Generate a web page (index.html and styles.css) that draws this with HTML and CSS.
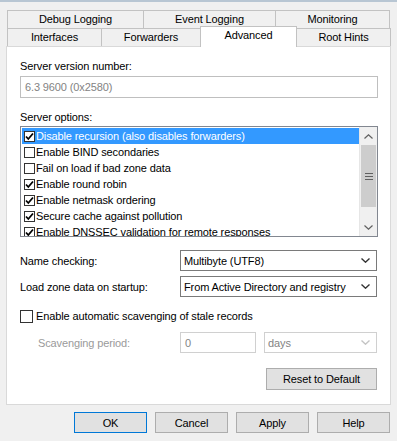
FILE: index.html
```html
<!DOCTYPE html>
<html>
<head>
<meta charset="utf-8">
<link rel="stylesheet" href="styles.css">
</head>
<body>
<div class="dialog">
  <div class="tabs">
    <div class="tabrow">
      <div class="tab w136">Debug Logging</div>
      <div class="tab w132">Event Logging</div>
      <div class="tab w115 last">Monitoring</div>
    </div>
    <div class="tabrow">
      <div class="tab w94">Interfaces</div>
      <div class="tab w99">Forwarders</div>
      <div class="tab w96 selected">Advanced</div>
      <div class="tab w94 last">Root Hints</div>
    </div>
  </div>
  <div class="panel">
    <div class="label first">Server version number:</div>
    <div class="textbox disabled">6.3 9600 (0x2580)</div>
    <div class="label second">Server options:</div>
    <div class="listbox">
      <div class="items">
        <div class="item sel"><span class="cb on"><svg viewBox="0 0 11 11" width="11" height="11"><path d="M2 5.5 L4.3 8 L9 2.5" fill="none" stroke="#000" stroke-width="1.8"/></svg></span>Disable recursion (also disables forwarders)</div>
        <div class="item"><span class="cb"></span>Enable BIND secondaries</div>
        <div class="item"><span class="cb"></span>Fail on load if bad zone data</div>
        <div class="item"><span class="cb on"><svg viewBox="0 0 11 11" width="11" height="11"><path d="M2 5.5 L4.3 8 L9 2.5" fill="none" stroke="#000" stroke-width="1.8"/></svg></span>Enable round robin</div>
        <div class="item"><span class="cb on"><svg viewBox="0 0 11 11" width="11" height="11"><path d="M2 5.5 L4.3 8 L9 2.5" fill="none" stroke="#000" stroke-width="1.8"/></svg></span>Enable netmask ordering</div>
        <div class="item"><span class="cb on"><svg viewBox="0 0 11 11" width="11" height="11"><path d="M2 5.5 L4.3 8 L9 2.5" fill="none" stroke="#000" stroke-width="1.8"/></svg></span>Secure cache against pollution</div>
        <div class="item"><span class="cb on"><svg viewBox="0 0 11 11" width="11" height="11"><path d="M2 5.5 L4.3 8 L9 2.5" fill="none" stroke="#000" stroke-width="1.8"/></svg></span>Enable DNSSEC validation for remote responses</div>
      </div>
      <div class="scrollbar">
        <div class="sb-btn"><svg viewBox="0 0 9 5" width="9" height="5"><path d="M0.5 4.5 L4.5 0.8 L8.5 4.5" fill="none" stroke="#606060" stroke-width="1.2"/></svg></div>
        <div class="sb-thumb"><svg viewBox="0 0 8 7" width="8" height="7"><path d="M0 0.5 H8 M0 3.5 H8 M0 6.5 H8" stroke="#606060" stroke-width="1"/></svg></div>
        <div class="sb-track"></div>
        <div class="sb-btn"><svg viewBox="0 0 9 5" width="9" height="5"><path d="M0.5 0.5 L4.5 4.2 L8.5 0.5" fill="none" stroke="#606060" stroke-width="1.2"/></svg></div>
      </div>
    </div>
    <div class="field row1">
      <span>Name checking:</span>
      <div class="select">Multibyte (UTF8)<svg class="chev" viewBox="0 0 9 5" width="9" height="5"><path d="M0.5 0.5 L4.5 4.2 L8.5 0.5" fill="none" stroke="#333" stroke-width="1.4"/></svg></div>
    </div>
    <div class="field row2">
      <span>Load zone data on startup:</span>
      <div class="select">From Active Directory and registry<svg class="chev" viewBox="0 0 9 5" width="9" height="5"><path d="M0.5 0.5 L4.5 4.2 L8.5 0.5" fill="none" stroke="#333" stroke-width="1.4"/></svg></div>
    </div>
    <div class="check">
      <span class="cb big"></span>Enable automatic scavenging of stale records
    </div>
    <div class="scav">
      <span class="scav-label">Scavenging period:</span>
      <div class="textbox small disabled">0</div>
      <div class="select days disabled">days<svg class="chev" viewBox="0 0 9 5" width="9" height="5"><path d="M0.5 0.5 L4.5 4.2 L8.5 0.5" fill="none" stroke="#c4c4c4" stroke-width="1.4"/></svg></div>
    </div>
    <div class="reset-row">
      <div class="button">Reset to Default</div>
    </div>
  </div>
  <div class="buttons">
    <div class="button default">OK</div>
    <div class="button">Cancel</div>
    <div class="button">Apply</div>
    <div class="button">Help</div>
  </div>
</div>
</body>
</html>
```
FILE: styles.css
```css
* { box-sizing: border-box; }
html, body {
  margin: 0;
  padding: 0;
  background: #f0f0f0;
}
body {
  width: 397px;
  height: 441px;
  overflow: hidden;
  font-family: "Liberation Sans", Arial, sans-serif;
  font-size: 11px;
  letter-spacing: -0.12px;
  color: #000;
  border-top: 2px solid #b8c6d3;
}
.dialog {
  padding-top: 8px;
}
.tabs {
  margin-left: 7px;
  display: flex;
  flex-direction: column;
}
.tabrow {
  display: flex;
  height: 18px;
}
.tab {
  height: 18px;
  border-top: 1px solid #c2c2c2;
  border-left: 1px solid #c2c2c2;
  background: #f0f0f0;
  display: flex;
  align-items: center;
  justify-content: center;
  line-height: 13px;
}
.tab.last { border-right: 1px solid #c2c2c2; }
.w136 { width: 136px; }
.w132 { width: 132px; }
.w115 { width: 115px; }
.w94 { width: 94px; }
.w99 { width: 99px; }
.w96 { width: 97px; }
.tab.selected {
  position: relative;
  z-index: 2;
  margin-top: -2px;
  height: 21px;
  background: #fff;
  border-right: 1px solid #c2c2c2;
  padding-bottom: 4px;
}
.tab.selected + .tab { border-left: none; }
.panel {
  margin-left: 6px;
  width: 385px;
  height: 359px;
  background: #fff;
  border: 1px solid #d9d9d9;
  padding: 0 12px 0 13px;
}
.label {
  line-height: 13px;
}
.label.first { margin-top: 13px; }
.label.second { margin-top: 13px; }
.textbox {
  margin-top: 3px;
  height: 22px;
  border: 1px solid #bfbfbf;
  padding-left: 4px;
  display: flex;
  align-items: center;
  background: #fff;
}
.disabled { color: #838383; }
.listbox {
  margin-top: 2px;
  height: 111px;
  border: 1px solid #828790;
  display: flex;
  overflow: hidden;
}
.items {
  flex: 1;
  padding-top: 1px;
  padding-left: 1px;
  overflow: hidden;
}
.item {
  height: 16px;
  display: flex;
  align-items: center;
  white-space: nowrap;
}
.item.sel {
  background: #3399ff;
  color: #fff;
}
.cb {
  width: 11px;
  height: 11px;
  border: 1px solid #333;
  background: #fff;
  margin: 0 1px 0 2px;
  flex: none;
  display: flex;
  align-items: center;
  justify-content: center;
  position: relative;
}
.cb svg {
  position: absolute;
  left: -1px;
  top: -1px;
}
.scrollbar {
  width: 18px;
  flex: none;
  background: #f0f0f0;
  display: flex;
  flex-direction: column;
  border-left: 1px solid #e6e6e6;
}
.sb-btn {
  height: 18px;
  display: flex;
  align-items: center;
  justify-content: center;
  background: #f0f0f0;
}
.sb-thumb {
  height: 62px;
  margin: 0 1px;
  background: #cdcdcd;
  display: flex;
  align-items: center;
  justify-content: center;
}
.sb-track { flex: 1; }
.field {
  display: grid;
  grid-template-columns: 160px 197px;
  align-items: center;
}
.field.row1 { margin-top: 13px; }
.field.row2 { margin-top: 5px; }
.select {
  height: 21px;
  border: 1px solid #7a7a7a;
  padding-left: 3px;
  padding-right: 6px;
  display: flex;
  align-items: center;
  justify-content: space-between;
  background: #fff;
}
.select.disabled { border-color: #d0d0d0; }
.check {
  margin-top: 11px;
  height: 16px;
  display: flex;
  align-items: center;
}
.cb.big {
  width: 13px;
  height: 13px;
  margin: 0 3px 0 0;
}
.scav {
  margin-top: 8px;
  display: flex;
  align-items: center;
  height: 21px;
}
.scav-label {
  width: 160px;
  padding-left: 18px;
  color: #9a9a9a;
}
.textbox.small {
  margin-top: 0;
  width: 76px;
  height: 21px;
  border-color: #d0d0d0;
}
.select.days {
  width: 113px;
  margin-left: 8px;
}
.reset-row {
  margin-top: 15px;
  display: flex;
  justify-content: flex-end;
  padding-right: 1px;
}
.button {
  height: 22px;
  border: 1px solid #adadad;
  background: #e1e1e1;
  display: flex;
  align-items: center;
  justify-content: center;
}
.reset-row .button { width: 111px; }
.buttons {
  margin-top: 7px;
  margin-left: 74px;
  display: flex;
  gap: 8px;
}
.buttons .button {
  width: 73px;
  height: 21px;
}
.button.default { border-color: #0078d7; }
```
